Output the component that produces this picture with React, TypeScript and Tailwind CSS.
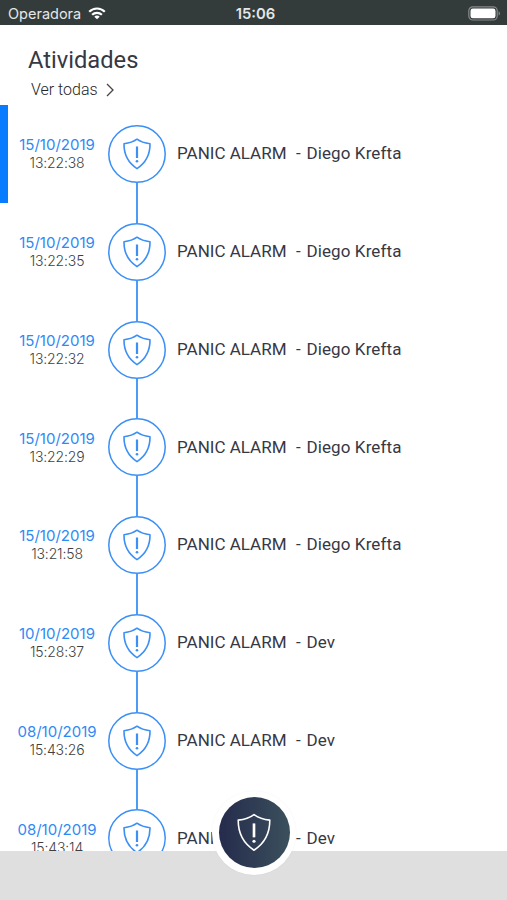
import React from "react";

type Activity = { date: string; time: string; who: string };

const activities: Activity[] = [
  { date: "15/10/2019", time: "13:22:38", who: "Diego Krefta" },
  { date: "15/10/2019", time: "13:22:35", who: "Diego Krefta" },
  { date: "15/10/2019", time: "13:22:32", who: "Diego Krefta" },
  { date: "15/10/2019", time: "13:22:29", who: "Diego Krefta" },
  { date: "15/10/2019", time: "13:21:58", who: "Diego Krefta" },
  { date: "10/10/2019", time: "15:28:37", who: "Dev" },
  { date: "08/10/2019", time: "15:43:26", who: "Dev" },
  { date: "08/10/2019", time: "15:43:14", who: "Dev" },
];

function ShieldAlert({ className, stroke }: { className: string; stroke: number }) {
  return (
    <svg viewBox="0 0 28 32" className={className} fill="none" stroke="currentColor" strokeLinejoin="round">
      <path
        d="M14 1.2C10.8 3.6 6.3 5.2 1 5.8C.9 15.6 4.4 24.4 14 30.6C23.6 24.4 27.1 15.6 27 5.8C21.7 5.2 17.2 3.6 14 1.2Z"
        strokeWidth={stroke}
      />
      <path d="M14 8.5V20" strokeWidth="2.2" />
      <circle cx="14" cy="23.2" r="1.3" fill="currentColor" stroke="none" />
    </svg>
  );
}

function StatusBar() {
  return (
    <header className="grid h-[25px] shrink-0 grid-cols-3 items-center bg-[#343b3b] pt-[2px] pr-[6px] pl-[8px] font-['Inter',sans-serif] leading-none text-[#e4e7e7]">
      <div className="flex items-center gap-[7px]">
        <span className="pt-[1px] text-[14.5px]">Operadora</span>
        <svg viewBox="0 0 18 13" className="h-[13px] w-[18px]" fill="none" stroke="white" strokeWidth="2.2">
          <path d="M1.2 4.8C5.6.4 12.4.4 16.8 4.8" />
          <path d="M4.1 7.8C6.9 5.1 11.1 5.1 13.9 7.8" />
          <path d="M9 12.3L6.3 9.7C7.8 8.2 10.2 8.2 11.7 9.7Z" fill="white" stroke="none" />
        </svg>
      </div>
      <span className="pt-[1px] pl-[2px] text-center text-[14.8px] font-semibold">15:06</span>
      <svg viewBox="0 0 33 15" className="h-[15px] w-[33px] justify-self-end">
        <rect x=".8" y=".8" width="28.4" height="13.2" rx="4" fill="none" stroke="#858989" strokeWidth="1.2" />
        <rect x="2.5" y="2.5" width="25" height="9.8" rx="2.4" fill="white" />
        <path d="M30.6 5.2C32.5 6 32.5 8.8 30.6 9.6Z" fill="#858989" />
      </svg>
    </header>
  );
}

function ActivityRow({ item, first }: { item: Activity; first: boolean }) {
  return (
    <li className="flex h-[97.75px] shrink-0 items-stretch">
      <div className={`w-2 shrink-0 ${first ? "bg-[#087cff]" : ""}`} />
      <div className="flex w-[98px] shrink-0 flex-col items-center justify-center pb-[0.6px] font-['Inter',sans-serif]">
        <span className="text-[15px] leading-[18px] text-[#2e8af5]">{item.date}</span>
        <span className="text-[14px] leading-[17px] font-light tracking-[-0.15px] text-[#3f3f3f]">{item.time}</span>
      </div>
      <div className="flex w-[62px] shrink-0 flex-col items-center">
        <div className={`w-[1.5px] flex-1 ${first ? "" : "bg-[#4c9bf5]"}`} />
        <div className="grid size-[58px] shrink-0 place-items-center text-[#3b8ff5]">
          <svg viewBox="0 0 58 58" className="col-start-1 row-start-1 size-[58px]" fill="none" stroke="currentColor">
            <circle cx="29" cy="29" r="28.2" strokeWidth="1.5" />
          </svg>
          <ShieldAlert className="col-start-1 row-start-1 h-[32px] w-[28px]" stroke={1.6} />
        </div>
        <div className="w-[1.5px] flex-1 bg-[#4c9bf5]" />
      </div>
      <p className="flex items-center pl-[9px] text-[17px] whitespace-pre text-[#363844]">
        <span>{"PANIC ALARM  "}</span>
        <span className="pr-[1.5px] pl-[1px]">{"- "}</span>
        <span className="tracking-[0.12px]">{item.who}</span>
      </p>
    </li>
  );
}

export default function App() {
  return (
    <div className="relative flex h-[900px] w-[507px] flex-col overflow-hidden bg-white font-['Roboto',sans-serif]">
      <StatusBar />
      <section className="h-[80.3px] shrink-0 pt-[20px] pl-[28px]">
        <h1 className="text-[23.7px] leading-[31px] text-[#363844]">Atividades</h1>
        <a className="mt-[4px] flex items-center gap-[8px] pl-[3px] text-[16px] leading-[20px] font-light text-[#252525]">
          Ver todas
          <svg viewBox="0 0 8 14" className="h-[14px] w-[8px]" fill="none" stroke="#444" strokeWidth="1.3">
            <path d="M1 1L7 7L1 13" />
          </svg>
        </a>
      </section>
      <ul className="flex min-h-0 flex-1 flex-col overflow-hidden">
        {activities.map((item, i) => (
          <ActivityRow key={item.time} item={item} first={i === 0} />
        ))}
      </ul>
      <footer className="h-[49px] shrink-0 bg-[#dfdfdf]" />
      <button
        aria-label="Alarme"
        className="absolute top-[790.7px] left-[212px] flex size-[84px] items-center justify-center rounded-full bg-white shadow-[0_0_2px_rgba(0,0,0,0.06)]"
      >
        <span className="flex size-[71px] items-center justify-center rounded-full bg-linear-to-r from-[#252b4c] to-[#3b505c] text-white">
          <ShieldAlert className="h-[39px] w-[34px]" stroke={1.3} />
        </span>
      </button>
    </div>
  );
}
